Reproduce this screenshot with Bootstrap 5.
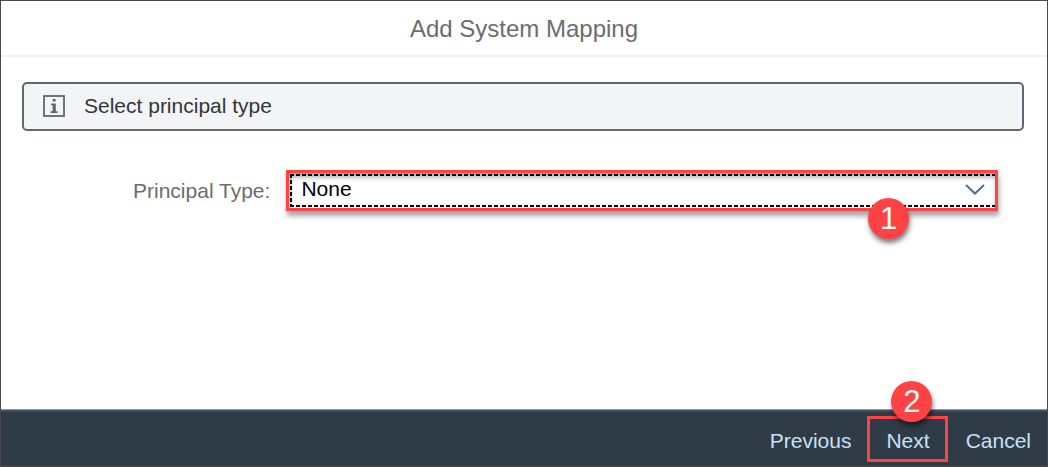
<!DOCTYPE html>
<html lang="en">
<head>
<meta charset="utf-8">
<meta name="viewport" content="width=device-width, initial-scale=1">
<title>Add System Mapping</title>
<link href="https://cdn.jsdelivr.net/npm/bootstrap@5.3.0/dist/css/bootstrap.min.css" rel="stylesheet">
<style>
  body { font-family: "Liberation Sans", Arial, sans-serif; font-size: 21px; line-height: 24px; color: #32363a; }
  .dialog { border: 1px solid #4a484a; background: #fff; }
  .dialog-head { border-bottom: 2px solid #f0f0f0; padding: 16px 16px 14px; }
  .dialog-head h1 { font-size: 24px; line-height: 24px; color: #6a6d70; }
  .dialog-body { padding: 25px 23px 24px 21px; }
  .info-strip { border: 2px solid #5e696e; border-radius: 5px; background: #f3f4f6; padding: 10px 19px 11px; gap: 19px; }
  .form-line { display: grid; grid-template-columns: 10fr 29fr; column-gap: 16px; align-items: center; margin: 39px 26px 0 3px; }
  .form-line label { color: #6a6d70; }
  /* highlighted field */
  .marked { border: 3px solid #ff4345; padding: 1px 0 1px 1px; box-shadow: 1px 5px 5px rgba(0,0,0,.35), inset 1px 4px 5px rgba(0,0,0,.35); }
  .type-select {
    appearance: none; border: 0; border-radius: 0; height: 33px; padding: 0 48px 4px 11px; color: #000;
    background:
      repeating-linear-gradient(90deg, #000 0 4px, transparent 4px 6px) 0 0 / 100% 2px no-repeat,
      repeating-linear-gradient(90deg, #000 0 4px, transparent 4px 6px) 0 100% / 100% 2px no-repeat,
      repeating-linear-gradient(180deg, #000 0 4px, transparent 4px 6px) 0 0 / 2px 100% no-repeat;
  }
  .type-select:focus { outline: 0; }
  .chevron { right: 10px; top: 10px; pointer-events: none; }
  .step { width: 41px; height: 41px; background: #ff4345; color: #fff; font-size: 31px; box-shadow: 1px 4px 5px rgba(0,0,0,.5); z-index: 2; }
  .step-one { right: 86px; top: 25px; }
  .step-two { left: 24px; top: -35px; }
  .dialog-foot { background: #2f3c48; border-top: 1px solid #8b9ba5; box-shadow: inset 0 2px 0 #3a5062; padding: 6px 0 4px; }
  .foot-btn { border: 0; background: none; color: #c7e0f7; height: 46px; padding: 3px 16px 0 18px; }
  .foot-btn.next { border: 3px solid #ff4345; padding: 3px 15px 0 16px; }
</style>
</head>
<body>
<main class="dialog min-vh-100 d-flex flex-column">
  <header class="dialog-head text-center"><h1 class="m-0 fw-normal">Add System Mapping</h1></header>
  <section class="dialog-body flex-grow-1">
    <div class="info-strip d-flex align-items-center" role="status">
      <svg width="22" height="22" viewBox="0 0 22 22" aria-hidden="true">
        <rect x="1" y="1" width="20" height="20" fill="none" stroke="#5e696e" stroke-width="1.8"/>
        <path fill="#5e696e" d="M9.600 4h3v2.600h-3zM8 8.600h4.800v7.600h1.800V18H7.600v-1.800h2V10.300H8z"/>
      </svg>
      <span>Select principal type</span>
    </div>
    <form class="form-line">
      <label class="text-end" for="principal-type">Principal Type:</label>
      <div class="marked position-relative">
        <select id="principal-type" class="type-select d-block w-100"><option>None</option></select>
        <svg class="chevron position-absolute" width="20" height="13" viewBox="0 0 20 13" aria-hidden="true"><path d="M1 2l9 8.500L19 2" fill="none" stroke="#4a7297" stroke-width="2"/></svg>
        <span class="step step-one position-absolute rounded-circle d-flex align-items-center justify-content-center">1</span>
      </div>
    </form>
  </section>
  <footer class="dialog-foot d-flex justify-content-end">
    <button type="button" class="foot-btn">Previous</button>
    <div class="position-relative">
      <button type="button" class="foot-btn next">Next</button>
      <span class="step step-two position-absolute rounded-circle d-flex align-items-center justify-content-center">2</span>
    </div>
    <button type="button" class="foot-btn">Cancel</button>
  </footer>
</main>
<script src="https://cdn.jsdelivr.net/npm/bootstrap@5.3.0/dist/js/bootstrap.bundle.min.js"></script>
</body>
</html>
